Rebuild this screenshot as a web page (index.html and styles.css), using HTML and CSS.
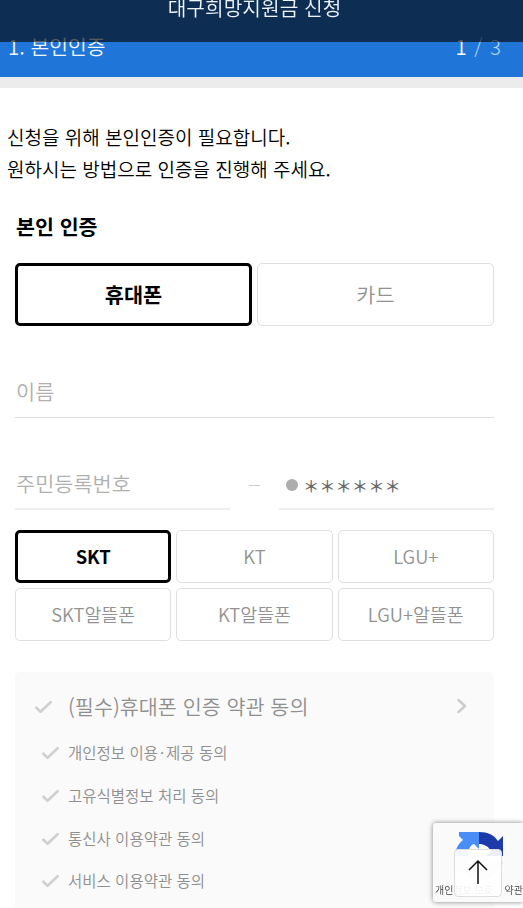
FILE: index.html
```
<!DOCTYPE HTML>
<html lang="ko">
  <head>
    <meta charset="utf-8">
    <meta name="viewport" content="width=device-width, initial-scale=1">
    <title>대구희망지원금 신청</title>
    <link rel="stylesheet" href="styles.css">
  </head>
  <body>

    <header class="header">
		<h1>대구희망지원금 신청</h1>
    </header>

    <div class="step">
		<span class="step-name">1. 본인인증</span>
		<span class="step-num"><b>1</b> / 3</span>
    </div>

    <p class="intro">신청을 위해 본인인증이 필요합니다.<br>원하시는 방법으로 인증을 진행해 주세요.</p>

    <form class="cert">
		<h2 class="cert-title">본인 인증</h2>
		<div class="method">
			<button type="button" class="btn on">휴대폰</button>
			<button type="button" class="btn">카드</button>
		</div>

		<input type="text" class="field name" placeholder="이름">

		<div class="jumin">
			<input type="text" class="field" placeholder="주민등록번호">
			<span class="dash"></span>
			<div class="field back"><span class="dot"></span><span class="stars">＊＊＊＊＊＊</span></div>
		</div>

		<div class="telecom">
			<button type="button" class="btn on">SKT</button>
			<button type="button" class="btn">KT</button>
			<button type="button" class="btn">LGU+</button>
			<button type="button" class="btn">SKT알뜰폰</button>
			<button type="button" class="btn">KT알뜰폰</button>
			<button type="button" class="btn">LGU+알뜰폰</button>
		</div>

		<div class="agree">
			<div class="agree-all">
				<svg class="check" viewBox="0 0 16 13"><path d="M1.3 7.2L5.2 11L14.7 2"/></svg>
				<span>(필수)휴대폰 인증 약관 동의</span>
				<svg class="arrow" viewBox="0 0 10 16"><path d="M1.5 2L8 8L1.5 14"/></svg>
			</div>
			<ul class="agree-list">
				<li><svg class="check" viewBox="0 0 16 13"><path d="M1.3 7.2L5.2 11L14.7 2"/></svg><span>개인정보 이용<i class="mid">·</i>제공 동의</span></li>
				<li><svg class="check" viewBox="0 0 16 13"><path d="M1.3 7.2L5.2 11L14.7 2"/></svg><span>고유식별정보 처리 동의</span></li>
				<li><svg class="check" viewBox="0 0 16 13"><path d="M1.3 7.2L5.2 11L14.7 2"/></svg><span>통신사 이용약관 동의</span></li>
				<li><svg class="check" viewBox="0 0 16 13"><path d="M1.3 7.2L5.2 11L14.7 2"/></svg><span>서비스 이용약관 동의</span></li>
			</ul>
		</div>
    </form>

    <div class="badge">
		<svg class="badge-logo" viewBox="0 0 50 50">
			<path fill="#1c3aa9" d="M24 1C33 1 39 4 43 10L48 5V25H31L36 20C33 15 29 13 24 13Z"/>
			<path fill="#4a8df6" d="M24 1V18L19 13C15 14 13 19 13 25H0C0 18 4 12 8 9L4 5V1Z"/>
			<path fill="#dcdcdc" d="M0 25H18L13 31C19 41 32 40 37 31H48C43 51 18 54 6 39L0 44Z"/>
		</svg>
		<div class="badge-text"><span>개인정보 보호</span><span>약관</span></div>
    </div>
    <button type="button" class="top-btn" aria-label="top">
		<svg viewBox="0 0 20 26"><path d="M10 25V2M1 11L10 2L19 11"/></svg>
    </button>

  </body>
</html>
```
FILE: styles.css
```
*{box-sizing:border-box;}
html,body{height:100%; overflow:hidden;}
body{margin:0; background-color:#fff; color:#000; font-family:"Noto Sans CJK KR", sans-serif;}
button,input{font-family:inherit; margin:0;}

.header{
	position: fixed;
	top: 0; left: 0;
	z-index: 2;
	width: 100%;
	height: 42px;
	background-color: rgba(4,7,10,.65);
	text-align: center;
}
.header h1{
	margin: -11px 0 0;
	padding-right: 14px;
	font-size: 20.3px;
	font-weight: 350;
	line-height: 37px;
	color: #eef4fb;
}
.step{
	display: flex;
	justify-content: space-between;
	height: 88px;
	padding: 30px 22px 0 8px;
	background-color: #1f76d8;
	border-bottom: 11px solid #ececec;
	font-size: 20.4px;
	font-weight: 350;
	line-height: 32px;
	color: #f0f6ff;
}
.step-num{color:#bcd9fa; font-weight:300; word-spacing:2px;}
.step-num b{font-weight:350; color:#fff;}

.intro{
	margin: 33px 0 0 7px;
	font-size: 19px;
	font-weight: 350;
	line-height: 31.5px;
}

.cert{padding:0 29px 0 15px;}
.cert-title{
	margin: 27px 0 0 1px;
	font-size: 20.6px;
	font-weight: 700;
	line-height: 30px;
}
.btn{
	padding: 0 0 2px;
	border: 1px solid #dfdfdf;
	border-radius: 5px;
	background-color: #fff;
	color: #929292;
	font-weight: 350;
}
.btn.on{border:3px solid #000; color:#000; font-weight:700;}
.method{
	display: grid;
	grid-template-columns: 1fr 1fr;
	gap: 5px;
	margin-top: 22px;
}
.method .btn{height:63px; font-size:20.8px;}

.field{
	display: block;
	width: 100%;
	height: 52px;
	padding: 0 1px 2px;
	border: 0;
	border-bottom: 1px solid #dfdfdf;
	border-radius: 0;
	background: none;
	font-size: 20.8px;
	font-weight: 350;
}
.field::placeholder{color:#b0b0b0; opacity:1;}
.name{margin-top:40px;}
.jumin{
	display: grid;
	grid-template-columns: 215px 1fr 215px;
	align-items: center;
	margin-top: 40px;
}
.dash{justify-self:center; width:11px; height:1px; margin-top:2px; background-color:#ccc;}
.jumin .field{padding-bottom:0; border-bottom:2px solid #efefef;}
.jumin .back{display:flex; align-items:center; padding-left:7px;}
.dot{width:12px; height:12px; margin-top:3px; border-radius:50%; background-color:#adadad;}
.stars{margin:4px 0 0 5px; font-size:16.3px; font-weight:500; line-height:20px; color:#666;}

.telecom{
	display: grid;
	grid-template-columns: repeat(3, 1fr);
	gap: 5px;
	margin-top: 20px;
}
.telecom .btn{height:53px; font-size:18.4px;}

.agree{
	margin-top: 31px;
	padding: 16px 27px 40px 20px;
	border-radius: 5px;
	background-color: #fafafa;
	color: #8f8f8f;
	font-weight: 350;
}
.check{
	flex: none;
	width: 17px;
	height: 14px;
	margin-top: 2px;
	fill: none;
	stroke: #d0d0d0;
	stroke-width: 2.5;
	stroke-linecap: round;
	stroke-linejoin: round;
}
.agree-all{display:flex; align-items:center; height:35px; font-size:20.7px;}
.agree-all span{margin-left:16px;}
.arrow{
	width: 10px;
	height: 16px;
	margin-top: 1px;
	margin-left: auto;
	fill: none;
	stroke: #ccc;
	stroke-width: 2.5;
	stroke-linecap: round;
	stroke-linejoin: round;
}
.agree-list{margin:8px 0 0; padding:0 0 0 7px; list-style:none;}
.agree-list li{
	display: flex;
	align-items: center;
	gap: 9px;
	height: 42.7px;
	font-size: 15.5px;
}
.mid{margin:0 2px; font-style:normal;}

/* recaptcha badge, top button */
.badge{
	position: fixed;
	right: 0;
	bottom: 6px;
	width: 90px;
	height: 79px;
	padding: 8px 0 0 2px;
	border-radius: 3px 0 0 3px;
	background-color: #fafafa;
	box-shadow: 0 0 5px #808080;
}
.badge-logo{display:block; width:50px; height:50px; margin-left:20px;}
.badge-text{
	display: flex;
	justify-content: space-between;
	font-size: 10px;
	font-weight: 350;
	line-height: 17px;
	white-space: nowrap;
	color: #444;
}
.top-btn{
	position: fixed;
	right: 21px;
	bottom: 11px;
	width: 48px;
	height: 48px;
	padding: 2px 0 0;
	border: 1px solid #ddd;
	border-radius: 4px;
	background-color: rgba(255,255,255,.92);
}
.top-btn svg{
	width: 20px;
	height: 26px;
	fill: none;
	stroke: #111;
	stroke-width: 1.5;
}
```
